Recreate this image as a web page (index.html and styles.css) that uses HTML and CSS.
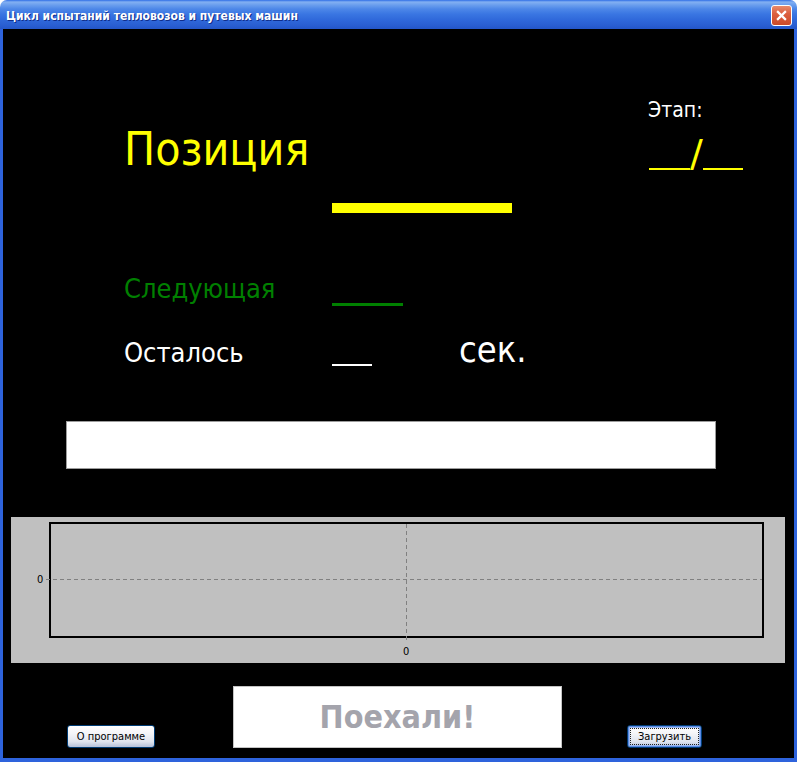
FILE: index.html
```html
<!DOCTYPE html>
<html lang="ru">
<head>
<meta charset="utf-8">
<title>Цикл испытаний тепловозов и путевых машин</title>
<link rel="stylesheet" href="styles.css">
</head>
<body>
<div class="window">
  <div class="titlebar">
    <span class="title">Цикл испытаний тепловозов и путевых машин</span>
    <button class="close" aria-label="Закрыть"><svg viewBox="0 0 21 21" width="21" height="21"><path d="M6.5 6.5 L14.5 14.5 M14.5 6.5 L6.5 14.5" stroke="#fff" stroke-width="2.4" stroke-linecap="square"/></svg></button>
  </div>
  <div class="client">
    <div class="row row-pos">
      <div class="label label-pos">Позиция</div>
      <div class="bar bar-pos"></div>
      <div class="stage">
        <div class="stage-label">Этап:</div>
        <div class="stage-value"><span class="blank blank-a"></span><span class="slash">/</span><span class="blank blank-b"></span></div>
      </div>
    </div>
    <div class="row row-next">
      <div class="label label-next">Следующая</div>
      <div class="bar bar-next"></div>
    </div>
    <div class="row row-left">
      <div class="label label-left">Осталось</div>
      <div class="bar bar-left"></div>
      <div class="unit">сек.</div>
    </div>
    <div class="progress"></div>
    <div class="chart">
      <div class="plot">
        <div class="grid-h"></div>
        <div class="grid-v"></div>
        <span class="tick tick-y">0</span>
        <span class="tick tick-x">0</span>
      </div>
    </div>
    <div class="actions">
      <button class="btn btn-about">О программе</button>
      <div class="go">Поехали!</div>
      <button class="btn btn-default"><span class="focus">Загрузить</span></button>
    </div>
  </div>
</div>
</body>
</html>
```

FILE: styles.css
```css
html, body {
  margin: 0;
  padding: 0;
  background: #ffffff;
}

.window {
  width: 797px;
  height: 762px;
  display: flex;
  flex-direction: column;
  font-family: "DejaVu Sans Condensed", "DejaVu Sans", sans-serif;
  font-stretch: condensed;
}

.titlebar {
  height: 29px;
  box-sizing: border-box;
  padding: 4px 5px 0 6px;
  display: flex;
  align-items: flex-start;
  justify-content: space-between;
  border-radius: 7px 7px 0 0;
  background: linear-gradient(to bottom,
    #2f6ee6 0px, #83b0f2 2px, #6a9eee 5px, #4d87e8 9px,
    #3a76e2 14px, #2f68da 20px, #2a5fd2 25px, #2456c8 29px);
}

.title {
  color: #ffffff;
  font-weight: bold;
  font-size: 12px;
  line-height: 25px;
  text-shadow: 1px 1px 0 #0f2d8a;
  white-space: nowrap;
}

.close {
  width: 21px;
  height: 21px;
  margin-top: 1px;
  padding: 0;
  border: 1px solid #ffffff;
  border-radius: 3px;
  background: linear-gradient(to bottom, #e88a6c 0%, #dc6040 40%, #cc4a28 100%);
  display: flex;
  align-items: center;
  justify-content: center;
  box-sizing: border-box;
}

.close svg {
  display: block;
  width: 19px;
  height: 19px;
}

.client {
  flex: 1;
  background: #000000;
  border-left: 3px solid #2e63dc;
  border-right: 3px solid #2e63dc;
  border-bottom: 4px solid #2e63dc;
  display: flex;
  flex-direction: column;
  align-items: flex-start;
}

.row {
  display: flex;
  align-items: flex-start;
  align-self: stretch;
}

.label {
  margin-left: 121px;
  width: 208px;
  white-space: nowrap;
}

.row-pos {
  height: 186px;
}

.label-pos {
  margin-top: 97px;
  font-size: 46px;
  line-height: 46px;
  color: #ffff00;
}

.bar-pos {
  width: 180px;
  height: 10px;
  margin-top: 174px;
  background: #ffff00;
}

.stage {
  margin-left: auto;
  margin-right: 46px;
  width: 100px;
  display: flex;
  flex-direction: column;
  align-items: flex-start;
}

.stage-label {
  margin-top: 70px;
  font-size: 21px;
  line-height: 22px;
  color: #ffffff;
}

.stage-value {
  margin-top: 16px;
  display: flex;
  align-items: flex-end;
  color: #ffff00;
}

.blank {
  height: 2px;
  background: #ffff00;
}

.blank-a {
  width: 41px;
  margin-left: 1px;
}

.blank-b {
  width: 40px;
}

.slash {
  font-family: "DejaVu Sans", sans-serif;
  font-stretch: normal;
  font-size: 38px;
  line-height: 33px;
  width: 13px;
}

.row-next {
  margin-top: 60px;
}

.label-next {
  font-size: 27px;
  line-height: 27px;
  color: #008000;
}

.bar-next {
  width: 71px;
  height: 3px;
  margin-top: 28px;
  background: #008000;
}

.row-left {
  margin-top: 22px;
}

.label-left {
  margin-top: 11px;
  font-size: 27px;
  line-height: 27px;
  color: #ffffff;
}

.bar-left {
  width: 40px;
  height: 2px;
  margin-top: 36px;
  background: #ffffff;
}

.unit {
  margin-left: 87px;
  margin-top: 4px;
  font-size: 36px;
  line-height: 36px;
  color: #ffffff;
}

.progress {
  margin-top: 53px;
  margin-left: 63px;
  width: 650px;
  height: 48px;
  box-sizing: border-box;
  background: #ffffff;
  border: 1px solid #9c9c9c;
}

.chart {
  margin-top: 48px;
  margin-left: 8px;
  width: 774px;
  height: 146px;
  box-sizing: border-box;
  padding: 5px 21px 25px 38px;
  background: #c0c0c0;
}

.plot {
  position: relative;
  height: 100%;
  box-sizing: border-box;
  border: 2px solid #000000;
}

.grid-h {
  position: absolute;
  left: -5px;
  right: 0;
  top: 55px;
  height: 1px;
  background: repeating-linear-gradient(to right, #808080 0 4px, transparent 4px 7px);
}

.grid-v {
  position: absolute;
  left: 355px;
  top: 0;
  bottom: -5px;
  width: 1px;
  background: repeating-linear-gradient(to bottom, #808080 0 4px, transparent 4px 7px);
}

.tick {
  position: absolute;
  font-size: 11px;
  line-height: 11px;
  color: #000000;
}

.tick-y {
  left: -14px;
  top: 50px;
}

.tick-x {
  left: 352px;
  top: 122px;
}

.actions {
  margin-top: 23px;
  padding-left: 64px;
  display: flex;
  align-items: flex-end;
}

.btn {
  height: 23px;
  box-sizing: border-box;
  padding: 0;
  border: 1px solid #003c74;
  border-radius: 3px;
  background: linear-gradient(to bottom, #ffffff 0%, #f4f5f8 35%, #dfe4ee 75%, #b6c1da 100%);
  font-family: "DejaVu Sans Condensed", "DejaVu Sans", sans-serif;
  font-stretch: condensed;
  font-size: 11px;
  color: #000000;
  display: flex;
  align-items: center;
  justify-content: center;
}

.btn-about {
  width: 88px;
}

.go {
  margin-left: 78px;
  width: 329px;
  height: 62px;
  box-sizing: border-box;
  background: #ffffff;
  border: 1px solid #c4c4c4;
  color: #a4a4ac;
  font-weight: bold;
  font-size: 32px;
  display: flex;
  align-items: center;
  justify-content: center;
}

.btn-default {
  margin-left: 65px;
  width: 75px;
  box-shadow: inset 0 0 0 1px #5b8ae6, inset 0 0 0 2px #9fbcf0;
}

.focus {
  display: flex;
  align-items: center;
  justify-content: center;
  width: 67px;
  height: 15px;
  border: 1px dotted #222222;
}
```
